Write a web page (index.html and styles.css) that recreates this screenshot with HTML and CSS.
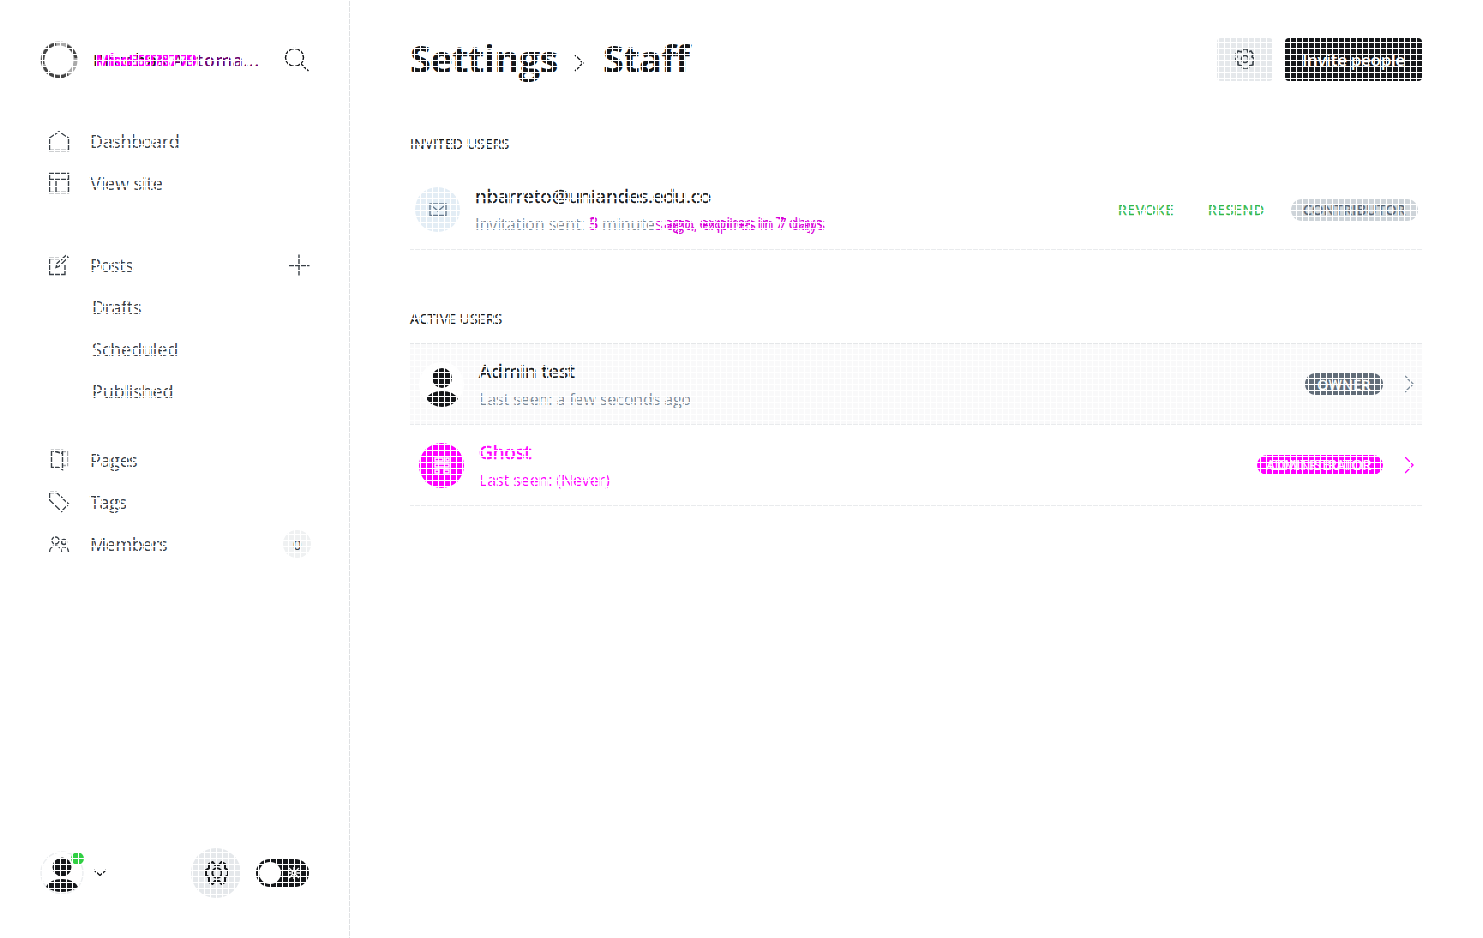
FILE: index.html
```html
<!DOCTYPE html>
<html lang="en">
<head>
<meta charset="utf-8">
<title>Settings - Staff</title>
<link rel="stylesheet" href="styles.css">
</head>
<body>
<div class="app">
  <aside class="sidebar">
    <header class="site">
      <svg class="logo" viewBox="0 0 38 38"><circle cx="19" cy="19" r="16.500" fill="none" stroke="#aaa" stroke-width="4"/><path d="M16 3A16.500 16.500 0 0 0 3 23M4 25A16 16 0 0 0 28 33M27 5A17 17 0 0 1 36 17" fill="none" stroke="#444" stroke-width="3"/></svg>
      <div class="site-name">Prueba<span class="mixed">s Automa...</span><span class="changed">MisoE69787 79</span></div>
      <svg class="search" viewBox="0 0 26 26"><circle cx="10.500" cy="10.500" r="9"/><path d="M17 17l7.500 7"/></svg>
    </header>
    <nav>
      <div class="group first">
        <a><svg viewBox="0 0 22 22"><path d="M1.500 8L11 1.500l9.500 6.500v12.500h-19z"/></svg>Dashboard</a>
        <a class="view"><svg viewBox="0 0 22 22"><path d="M1.500 1.500h19v19h-19zM1.500 7.500h19M8 7.500v13"/></svg>View site</a>
      </div>
      <div class="group second">
        <a><svg viewBox="0 0 22 22"><path d="M11 4.500H1.500v16h15.500V11M8 13.500l1-4 9-8 2 2-9 9z"/></svg>Posts<svg class="plus" viewBox="0 0 22 22"><path d="M11 .5v21M.5 11.500h21"/></svg></a>
        <a class="sub">Drafts</a>
        <a class="sub wide">Scheduled</a>
        <a class="sub wide">Published</a>
      </div>
      <div class="group">
        <a><svg viewBox="0 0 22 22"><path d="M3.500 1.500h11v19l-4-2h-7zM3.500 1.500l11 3"/><path class="faint" d="M14.500 2.500h5v14h-5"/></svg>Pages</a>
        <a><svg viewBox="0 0 22 22"><path d="M1.500 2v7l12 11.500 7-7.500-12-11.500h-6z"/></svg>Tags</a>
        <a><svg viewBox="0 0 22 22"><circle cx="7.500" cy="7.500" r="3.500"/><circle cx="16" cy="9" r="2.500"/><path d="M1.500 19c0-8 12-8 12 0M14 14c4-1 6 1 6.500 5"/></svg>Members<span class="count">0</span></a>
      </div>
    </nav>
    <footer>
      <div class="me"><svg class="person" viewBox="0 0 44 44"><circle cx="22" cy="22" r="21" fill="#fff" stroke="#eceef0"/><circle cx="22" cy="16" r="9.500"/><path d="M6 36Q10 28 22 28T38 36Q31 41 22 41T6 36z"/></svg><i></i></div>
      <svg class="down" viewBox="0 0 14 8"><path d="M1 1l6 5.500L13 1"/></svg>
      <div class="round-button"><svg class="gear" viewBox="0 0 24 24"><circle cx="12" cy="12" r="4.700"/><path d="M7.500 1L10 4h4l2.500-3L20 3v4.500l3 1.500v5.500L20 16v5l-3.500 2-2.500-3h-4l-2.500 3L4 21v-5l-3-1.500V9l3-1.500V3z"/></svg></div>
      <div class="toggle"><b></b><svg viewBox="0 0 14 14"><circle cx="7" cy="7" r="2"/><path d="M7 1v3M7 10v3M1 7h3M10 7h3M2 2l3 3M12 2L9 5M2 12l3-3M12 12L9 9"/></svg></div>
    </footer>
  </aside>
  <main>
    <header class="page-header">
      <h1><span class="settings">Settings</span><svg viewBox="0 0 10 18"><path d="M1 1l8 8-8 8"/></svg><span>Staff</span></h1>
      <div class="button"><svg viewBox="0 0 20 20"><circle cx="10" cy="10" r="3.500"/><path d="M8 0h4l1 3 3-1 2 3-1 3 3 2-2 3v3l-4 1-1 3H8l-1-3-4-1V13L0 11l2-3-1-3 2-3 4 1z"/></svg></div>
      <div class="button primary">Invite people</div>
    </header>
    <h2>INVITED USERS</h2>
    <section class="row invited">
      <div class="avatar mail"><svg viewBox="0 0 18 14"><path d="M1 1h16v11.500H1zM3 3l6 5 6-5"/></svg></div>
      <div class="text"><h3>nbarreto@uniandes.edu.co</h3><p class="invitation">Invitation sent: <span class="mark">5<em>3</em></span> minute<span class="mark">s ago, expires in 7 days<em>ago, expires in 7 days</em></span></p></div>
      <span class="link">REVOKE</span><span class="link resend">RESEND</span><span class="pill">CONTRIBUTOR</span>
    </section>
    <h2 class="active-title">ACTIVE USERS</h2>
    <section class="row active">
      <div class="avatar blank"><svg class="person" viewBox="0 0 44 44"><circle cx="22" cy="16" r="10"/><path d="M6 37Q10 29 22 29T38 37Q31 45 22 45T6 37z"/></svg></div>
      <div class="text"><h3>Admin test</h3><p>Last seen: a few seconds ago</p></div>
      <span class="pill owner">OWNER</span><svg class="next" viewBox="0 0 10 18"><path d="M1 1l8 8-8 8"/></svg>
    </section>
    <section class="row ghost">
      <div class="avatar"><svg viewBox="0 0 18 18"><path d="M2 2h8v3H2zM13 2h3v3h-3zM2 8h14v3H2zM2 14h4v3H2zM11 14h5v3h-5z"/></svg></div>
      <div class="text"><h3>Ghost</h3><p>Last seen: (Never)</p></div>
      <span class="pill"><span>CONTRIBUTOR</span><span class="over">ADMINISTRATOR</span></span><svg class="next" viewBox="0 0 10 18"><path d="M1 1l8 8-8 8"/></svg>
    </section>
  </main>
</div>
<div class="mesh"></div>
</body>
</html>
```

FILE: styles.css
```css
* { box-sizing: border-box; }
body { margin: 0; background: #fff; color: #15171a; font-family: "Open Sans", "Noto Sans", sans-serif; overflow: hidden; }
svg { display: block; flex: none; fill: none; stroke: currentColor; stroke-width: 1.4; }
h1, h2, h3, p { margin: 0; }
.app { display: flex; height: 938px; }
.sidebar { width: 350px; border-right: 1px solid #dfe1e3; padding: 40px 38px 40px 40px; display: flex; flex-direction: column; }
.site { display: flex; align-items: center; height: 40px; }
.logo { width: 38px; height: 38px; }
.site-name { position: relative; margin-left: 15px; width: 191px; font-size: 17.5px; font-weight: 600; white-space: nowrap; letter-spacing: .7px; }
.changed { position: absolute; left: 2px; top: 0; color: #f0f; letter-spacing: -2px; font-weight: 700; }
.mixed { color: #6b006d; }
.search { width: 26px; height: 26px; }
nav { padding-top: 40px; color: #394047; }
.group { margin-bottom: 27px; }
.group.first { margin-bottom: 40px; }
.group a { height: 42px; display: flex; align-items: center; font-size: 18px; letter-spacing: -.4px; padding-left: 8px; }
.group a.view { letter-spacing: -.1px; }
.group a svg { width: 22px; height: 22px; margin-right: 20px; }
.group a.sub { padding-left: 52px; }
.group a.sub.wide { letter-spacing: -.15px; }
.group a .plus { margin: 0 1px 0 auto; }
.faint { opacity: .45; }
.count { width: 28px; height: 28px; margin-left: auto; border-radius: 50%; background: #eff1f2; display: grid; place-items: center; font-size: 15px; }
footer { margin-top: auto; height: 51px; display: flex; align-items: center; }
.me { position: relative; width: 44px; }
.me .person { width: 44px; height: 44px; }
.person { fill: #15171a; stroke: none; }
.me i { position: absolute; right: 0; top: 1px; width: 13px; height: 13px; border-radius: 50%; background: #30cf43; }
.down { width: 14px; height: 8px; margin-left: 9px; }
.round-button { width: 50px; height: 50px; border-radius: 50%; background: #e5e8eb; display: grid; place-items: center; margin-left: 84px; }
.gear { width: 24px; height: 24px; margin-left: 1px; stroke-width: 2; }
.toggle { width: 53px; height: 28px; border-radius: 14px; background: #15171a; margin-left: 15px; padding: 3px 8px 3px 3px; display: flex; justify-content: space-between; align-items: center; color: #fff; }
.toggle b { width: 22px; height: 22px; border-radius: 50%; background: #fff; }
.toggle svg { width: 14px; height: 14px; }
main { flex: 1; padding: 38px 61px 0 60px; }
.page-header { display: flex; align-items: center; height: 43px; }
h1 { flex: 1; display: flex; align-items: center; font-size: 38px; line-height: 41px; padding-bottom: 2px; letter-spacing: -.7px; }
.settings { width: 164px; }
h1 svg { width: 10px; height: 18px; margin: 8px 19px 0 0; }
.button { width: 56px; height: 43px; border-radius: 4px; background: #e5e8eb; display: grid; place-items: center; color: #394047; }
.button svg { width: 20px; height: 20px; margin-bottom: 2px; stroke-width: 1.6; }
.button.primary { width: 137px; margin-left: 12px; background: #15171a; color: #fff; font-size: 17px; font-weight: 600; letter-spacing: -.3px; }
h2 { margin-top: 53px; height: 20px; line-height: 20px; font-size: 14px; font-weight: 400; letter-spacing: .1px; -webkit-text-stroke: .2px; }
.row { display: flex; align-items: center; height: 81px; border-bottom: 1px solid #e9ebed; padding: 0 8px 0 9px; }
.row.invited { height: 80px; margin-top: 16px; padding: 0 4px 0 5px; }
.active-title { margin-top: 59px; }
.row.active { margin-top: 14px; height: 82px; border-top: 1px solid #e5e7e9; background: #f9f9fa; }
.avatar { width: 45px; height: 45px; border-radius: 50%; display: grid; place-items: center; flex: none; }
.avatar.mail { background: #e3edf5; color: #66798d; }
.avatar.mail svg { width: 18px; height: 14px; }
.avatar.blank { background: #fff; }
.avatar .person { width: 44px; height: 44px; overflow: visible; }
.text { flex: 1; padding: 2px 0 0 15px; }
.invited .text { padding-top: 1px; }
h3 { font-size: 19px; line-height: 28px; font-weight: 500; letter-spacing: -.23px; -webkit-text-stroke: .4px; }
.active h3 { letter-spacing: 0; }
p { font-size: 16px; line-height: 28px; color: #7c8b9a; letter-spacing: -.1px; white-space: nowrap; }
.invitation { letter-spacing: -.05px; }
.mark { position: relative; color: #d900d9; }
.mark em { position: absolute; left: 0; top: -4px; font-style: normal; }
.mark + .mark em { left: 9px; }
.link { color: #30b84a; font-size: 14px; font-weight: 500; letter-spacing: .65px; width: 90px; -webkit-text-stroke: .4px; }
.link.resend { width: 83px; }
.pill { width: 127px; height: 22px; border-radius: 11px; background: #ced4d9; color: #586573; display: grid; place-items: center; font-size: 14px; font-weight: 500; letter-spacing: .55px; -webkit-text-stroke: .4px; }
.pill.owner { width: 78px; background: #626d79; color: #fff; }
.next { width: 10px; height: 18px; margin-left: 21px; color: #7c8b9a; }
.ghost, .ghost p { color: #f0f; }
.ghost h3 { letter-spacing: -.1px; -webkit-text-stroke: .7px; }
.ghost .avatar { background: #f0f; color: #fff; }
.ghost .avatar svg { width: 18px; height: 18px; }
.ghost .pill { position: relative; width: 126px; height: 20px; background: #f0f; color: #fff; line-height: 20px; -webkit-text-stroke: 0; }
.ghost .pill .over { position: absolute; left: 9px; top: 0; letter-spacing: -.4px; }
.ghost .next { color: #f0f; }
/* Fine white mesh above the interface */
.mesh { position: fixed; inset: 0; pointer-events: none; background: linear-gradient(90deg, #fff 1px, transparent 1px) 0 0 / 6px 6px, linear-gradient(#fff 1px, transparent 1px) 0 0 / 6px 6px; }
```
